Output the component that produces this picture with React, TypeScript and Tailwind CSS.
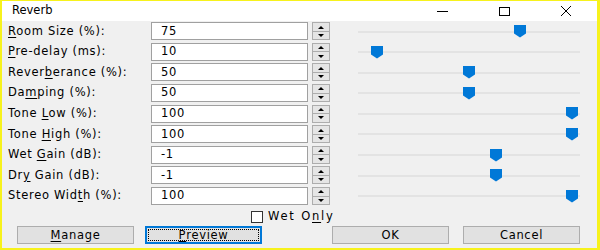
const rows = [
  { pre: "", u: "R", post: "oom Size (%):", value: "75", pos: 0.73 },
  { pre: "", u: "P", post: "re-delay (ms):", value: "10", pos: 0.085 },
  { pre: "Rever", u: "b", post: "erance (%):", value: "50", pos: 0.5 },
  { pre: "Da", u: "m", post: "ping (%):", value: "50", pos: 0.5 },
  { pre: "Tone ", u: "L", post: "ow (%):", value: "100", pos: 0.965 },
  { pre: "Tone ", u: "H", post: "igh (%):", value: "100", pos: 0.965 },
  { pre: "Wet ", u: "G", post: "ain (dB):", value: "-1", pos: 0.62 },
  { pre: "Dr", u: "y", post: " Gain (dB):", value: "-1", pos: 0.62 },
  { pre: "Stereo Wid", u: "t", post: "h (%):", value: "100", pos: 0.965 },
]

function Spinner() {
  return (
    <div className="flex h-[18px] w-[18px] flex-col border border-[#adadad] bg-[#e5e5e5]">
      <div className="flex flex-1 items-center justify-center border-b border-[#adadad]">
        <div className="h-0 w-0 border-x-[3.5px] border-b-[3px] border-x-transparent border-b-black" />
      </div>
      <div className="flex flex-1 items-center justify-center">
        <div className="h-0 w-0 border-x-[3.5px] border-t-[3px] border-x-transparent border-t-black" />
      </div>
    </div>
  )
}

function Slider({ pos }: { pos: number }) {
  return (
    <div className="relative ml-[28px] h-full w-[222px]">
      <div className="absolute left-0 right-0 top-[9.5px] h-[2px] bg-[#e3e3e3]" />
      <div
        className="absolute top-[4px] h-[13px] w-[12px] -translate-x-1/2"
        style={{ left: `${pos * 100}%` }}
      >
        <svg width="12" height="13" viewBox="0 0 12 13">
          <path d="M0 0H12V8.5L6 12.5L0 8.5Z" fill="#0078d7" />
        </svg>
      </div>
    </div>
  )
}

function Button({ label, u, rest, focused }: { label?: string; u?: string; rest?: string; focused?: boolean }) {
  return (
    <div
      className={
        focused
          ? "flex h-[18px] w-[117px] items-center justify-center border-2 border-[#0078d7] bg-[#e1e1e1] p-[1px]"
          : "flex h-[18px] w-[117px] items-center justify-center border border-[#adadad] bg-[#e1e1e1]"
      }
    >
      <div className={focused ? "flex h-full w-full items-center justify-center border border-dotted border-black" : "flex items-center"}>
        {label}
        {u && <span className="underline underline-offset-2">{u}</span>}
        {rest}
      </div>
    </div>
  )
}

export default function App() {
  return (
    <div className="h-[250px] w-[600px] border-b-2 border-l-2 border-r-[3px] border-t border-[#f7f21c] bg-[#f0f0f0] font-['DejaVu_Sans',sans-serif] text-[11.5px] text-black">
      <div className="flex h-[20px] items-center bg-white">
        <span className="ml-[10px] text-[11.5px]">Reverb</span>
        <div className="ml-auto flex items-center">
          <div className="flex w-[62px] justify-center">
            <div className="h-[1px] w-[11px] bg-black" />
          </div>
          <div className="flex w-[62px] justify-center">
            <div className="h-[9px] w-[11px] border border-black" />
          </div>
          <div className="flex w-[62px] justify-center">
            <svg width="12" height="12" viewBox="0 0 12 12">
              <path d="M1 1L11 11M11 1L1 11" stroke="black" strokeWidth="1" />
            </svg>
          </div>
        </div>
      </div>

      <div className="flex flex-col">
        {rows.map((r, i) => (
          <div key={i} className="flex h-[20.6px] items-center">
            <div className="w-[149px] pl-[6px] tracking-[0.7px]">
              {r.pre}
              <span className="underline underline-offset-2">{r.u}</span>
              {r.post}
            </div>
            <div className="flex h-[18px] w-[157px] items-center border border-[#a0a0a0] bg-white pl-[9px] tracking-[0.7px]">
              {r.value}
            </div>
            <div className="ml-[4px]">
              <Spinner />
            </div>
            <Slider pos={r.pos} />
          </div>
        ))}
      </div>

      <div className="mt-[2px] flex h-[17px] items-center pl-[249px] tracking-[1.8px]">
        <div className="mr-[5px] h-[12px] w-[12px] border border-[#333] bg-white" />
        Wet O<span className="underline underline-offset-2">n</span>ly
      </div>

      <div className="mt-[1px] flex items-center tracking-[0.7px]">
        <div className="ml-[15px]">
          <Button u="M" rest="anage" />
        </div>
        <div className="ml-[11px]">
          <Button focused u="P" rest="review" />
        </div>
        <div className="ml-[70px]">
          <Button label="OK" />
        </div>
        <div className="ml-[14px]">
          <Button label="Cancel" />
        </div>
      </div>
    </div>
  )
}
